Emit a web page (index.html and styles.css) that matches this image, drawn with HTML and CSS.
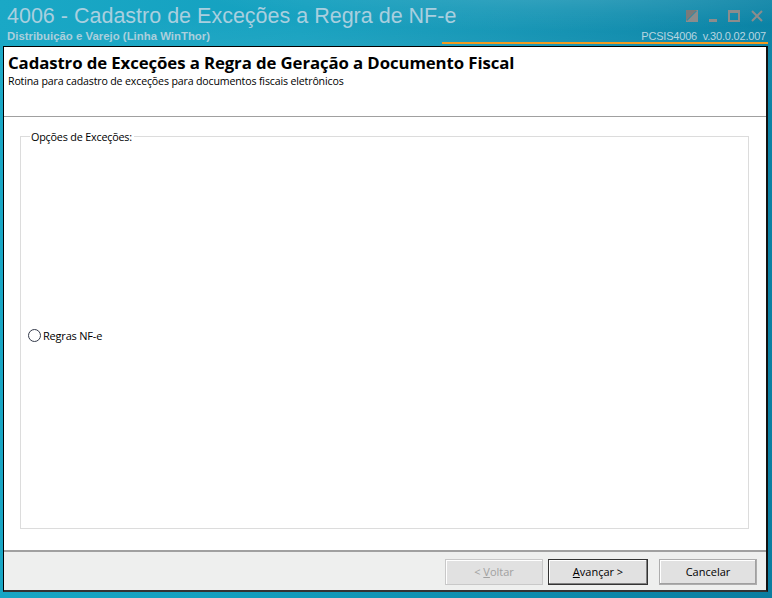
FILE: index.html
```html
<!DOCTYPE html>
<html lang="pt-BR">
<head>
    <meta charset="UTF-8">
    <meta name="viewport" content="width=device-width, initial-scale=1.0">
    <title>4006 - Cadastro de Exceções a Regra de NF-e</title>
    <link rel="stylesheet" href="styles.css">
</head>
<body>
    <div class="window">
        <div class="titlebar">
            <div class="row top">
                <h1>4006 - Cadastro de Exceções a Regra de NF-e</h1>
                <div class="controls">
                    <svg width="12" height="12" viewBox="0 0 12 12"><rect x="0.5" y="0.5" width="11" height="11" fill="none" stroke="#8c8c8c"/><path d="M0 12 L12 0 L12 12 Z" fill="#8c8c8c"/><path d="M0 0 L11 0 L0 11 Z" fill="#7a7a7a"/></svg>
                    <svg width="8" height="12" viewBox="0 0 8 12"><rect x="0" y="9" width="8" height="3" fill="#8c8c8c"/></svg>
                    <svg width="12" height="12" viewBox="0 0 12 12"><rect x="1" y="1" width="10" height="10" fill="none" stroke="#8c8c8c" stroke-width="2"/><rect x="0" y="0" width="12" height="3" fill="#8c8c8c"/></svg>
                    <svg width="12" height="12" viewBox="0 0 12 12"><path d="M1 1 L11 11 M11 1 L1 11" stroke="#8c8c8c" stroke-width="2"/></svg>
                </div>
            </div>
            <div class="row sub">
                <span class="product">Distribuição e Varejo (Linha WinThor)</span>
                <span class="version">PCSIS4006&nbsp; v.30.0.02.007</span>
            </div>
            <div class="accent"></div>
        </div>

        <div class="dialog">
            <div class="header">
                <h2>Cadastro de Exceções a Regra de Geração a Documento Fiscal</h2>
                <p>Rotina para cadastro de exceções para documentos fiscais eletrônicos</p>
            </div>
            <div class="content">
                <fieldset class="group">
                    <legend>Opções de Exceções:</legend>
                </fieldset>
                <label class="option"><span class="radio"></span>Regras NF-e</label>
            </div>
            <div class="footer">
                <button class="btn" disabled>&lt; <u>V</u>oltar</button>
                <button class="btn default"><u>A</u>vançar &gt;</button>
                <button class="btn cancel">Cancelar</button>
            </div>
        </div>
    </div>
</body>
</html>
```

FILE: styles.css
```css
*{
    margin: 0;
    padding: 0;
    box-sizing: border-box;
}

body{
    width: 772px;
    height: 598px;
    overflow: hidden;
    font-family: "DejaVu Sans", Tahoma, sans-serif;
    font-size: 11px;
    color: #000;
    background:
        radial-gradient(ellipse 520px 60px at 560px -10px, rgba(255,255,255,0.18), rgba(255,255,255,0) 70%),
        radial-gradient(ellipse 700px 90px at 420px 70px, rgba(255,255,255,0.10), rgba(255,255,255,0) 70%),
        linear-gradient(100deg, #1aa8c6 0%, #14a0bf 35%, #0e8fb0 65%, #0a7da0 100%);
}

.window{
    height: 598px;
    display: flex;
    flex-direction: column;
}

.titlebar{
    height: 45px;
    display: flex;
    flex-direction: column;
}

.titlebar .row{
    display: flex;
    justify-content: space-between;
    align-items: center;
}

.titlebar .top{
    height: 30px;
    padding: 3px 7px 0 7px;
}

.titlebar h1{
    font-family: "Liberation Sans", Arial, sans-serif;
    font-weight: normal;
    font-size: 21.5px;
    color: #a9cfdf;
}

.controls{
    display: flex;
    align-items: center;
    gap: 11px;
    margin-top: -2px;
    margin-right: 2px;
}

.titlebar .sub{
    height: 11px;
    padding: 0 6px 0 7px;
}

.product{
    font-family: "Liberation Sans", Arial, sans-serif;
    font-weight: bold;
    font-size: 11.4px;
    color: #abcfdc;
}

.version{
    font-family: "Liberation Sans", Arial, sans-serif;
    font-size: 11px;
    letter-spacing: -0.2px;
    color: #b7d5e0;
}

.accent{
    margin: 1px 4px 0 442px;
    height: 2px;
    background: #f39a1e;
}

.dialog{
    margin: 1px 4px 0 3px;
    height: 546px;
    border: 1px solid #000;
    border-right: 2px solid #111;
    border-bottom: 2px solid #333;
    display: flex;
    flex-direction: column;
    background: #fff;
}

.header{
    height: 70px;
    padding: 5px 4px 0 4px;
    border-bottom: 1px solid #a0a0a0;
}

.header h2{
    font-family: "Open Sans", "Noto Sans", sans-serif;
    font-size: 16.8px;
    font-weight: bold;
    line-height: 22px;
    letter-spacing: -0.1px;
}

.header p{
    font-family: "Open Sans", "Noto Sans", sans-serif;
    font-size: 10.6px;
    line-height: 15px;
    letter-spacing: -0.15px;
}

.content{
    flex: 1;
    position: relative;
    padding: 12px 17px 21px 16px;
    border-bottom: 2px solid #a0a0a0;
}

.group{
    height: 100%;
    border: 1px solid #dcdcdc;
    padding: 0 8px;
}

.group legend{
    font-family: "Open Sans", "Noto Sans", sans-serif;
    font-size: 10.8px;
    letter-spacing: -0.2px;
    padding: 0 2px 0 1px;
    margin-left: 1px;
}

.option{
    position: absolute;
    left: 24px;
    top: 211px;
    display: flex;
    align-items: center;
    gap: 2px;
    font-family: "Open Sans", "Noto Sans", sans-serif;
    font-size: 11px;
    letter-spacing: -0.2px;
}

.radio{
    width: 13px;
    height: 13px;
    border: 1px solid #333a4a;
    border-radius: 50%;
    background: #fff;
}

.footer{
    height: 38px;
    background: #eeefee;
    display: flex;
    justify-content: flex-end;
    align-items: center;
    padding: 1px 9px 0 0;
    gap: 5px;
}

.btn{
    width: 98px;
    height: 26px;
    font-family: "Open Sans", "Noto Sans", sans-serif;
    font-size: 11px;
    color: #000;
    background: #e1e1e1;
    border: 1px solid #adadad;
    box-shadow: inset -1px -1px 0 #a0a0a0, inset 1px 1px 0 #fff;
}

.btn:disabled{
    color: #a0a0a0;
    border-color: #c8c8c8;
    box-shadow: inset 1px 1px 0 #fff;
}

.btn.default{
    width: 100px;
    border: 1px solid #333;
    box-shadow: inset -1px -1px 0 #808080, inset 1px 1px 0 #fff;
}

.btn.cancel{
    margin-left: 6px;
}
```
